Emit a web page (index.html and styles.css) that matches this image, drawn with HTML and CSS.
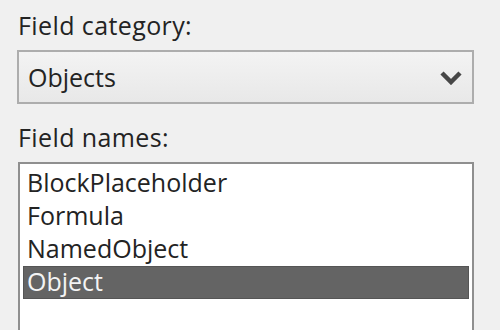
FILE: index.html
```html
<!DOCTYPE html>
<html>
<head>
<meta charset="utf-8">
<link rel="stylesheet" href="styles.css">
</head>
<body>
<div class="panel">
  <div class="label">Field category:</div>
  <div class="combo">
    <span class="combo-text">Objects</span>
    <svg class="chevron" width="22" height="14" viewBox="0 0 22 14"><path d="M2 2 L11 11 L20 2" fill="none" stroke="#474747" stroke-width="4.5" stroke-linejoin="miter"/></svg>
  </div>
  <div class="label label-names">Field names:</div>
  <div class="listbox">
    <div class="item">BlockPlaceholder</div>
    <div class="item">Formula</div>
    <div class="item">NamedObject</div>
    <div class="item selected">Object</div>
  </div>
</div>
</body>
</html>
```

FILE: styles.css
```css
html, body {
  margin: 0;
  padding: 0;
  background: #f0f0f0;
  width: 500px;
  height: 330px;
  overflow: hidden;
}
.panel {
  padding: 8px 26px 0 17px;
  font-family: "Open Sans", "Noto Sans", sans-serif;
  font-size: 25px;
  color: #232323;
}
.label {
  line-height: 34px;
  padding-left: 1px;
  letter-spacing: 0.4px;
}
.combo {
  margin-top: 8px;
  height: 50px;
  border: 2px solid #adadad;
  background: linear-gradient(#f3f3f3, #e8e8e8);
  display: flex;
  align-items: center;
  justify-content: space-between;
  padding: 0 10px 0 9px;
}
.combo-text {
  line-height: 30px;
}
.chevron {
  margin-top: 2px;
}
.label-names {
  margin-top: 16px;
}
.listbox {
  box-sizing: border-box;
  margin-top: 8px;
  margin-left: 1px;
  height: 168px;
  background: #fff;
  border: 2px solid #8f8f8f;
  border-bottom: none;
  padding: 3px 3px 0 3px;
}
.item {
  height: 33px;
  line-height: 31px;
  padding-left: 4px;
}
.item.selected {
  background: #646464;
  color: #f4f4f4;
  box-shadow: inset 0 0 0 1px #555;
}
```
